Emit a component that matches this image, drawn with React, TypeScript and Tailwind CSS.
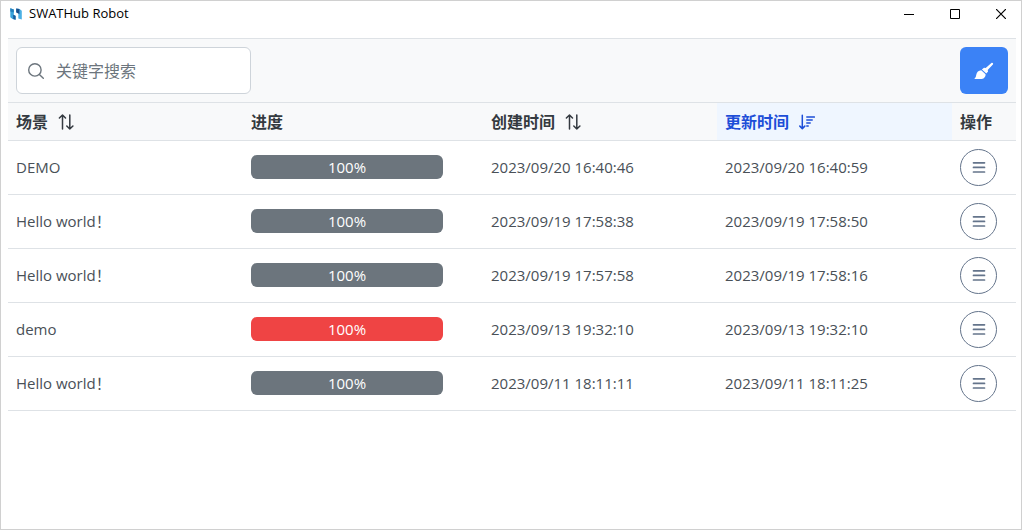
import type { ReactNode } from 'react';

type SortState = 'none' | 'both' | 'desc';
type Column = { title: string; sort: SortState; width: string };
type Row = { id: number; scene: string; progress: number; failed: boolean; created: string; updated: string };

const columns: Column[] = [
  { title: '场景', sort: 'both', width: 'w-[235px]' },
  { title: '进度', sort: 'none', width: 'w-[240px]' },
  { title: '创建时间', sort: 'both', width: 'w-[234px]' },
  { title: '更新时间', sort: 'desc', width: 'w-[235px]' },
  { title: '操作', sort: 'none', width: 'w-16' },
];

const rows: Row[] = [
  { id: 1, scene: 'DEMO', progress: 100, failed: false, created: '2023/09/20 16:40:46', updated: '2023/09/20 16:40:59' },
  { id: 2, scene: 'Hello world！', progress: 100, failed: false, created: '2023/09/19 17:58:38', updated: '2023/09/19 17:58:50' },
  { id: 3, scene: 'Hello world！', progress: 100, failed: false, created: '2023/09/19 17:57:58', updated: '2023/09/19 17:58:16' },
  { id: 4, scene: 'demo', progress: 100, failed: true, created: '2023/09/13 19:32:10', updated: '2023/09/13 19:32:10' },
  { id: 5, scene: 'Hello world！', progress: 100, failed: false, created: '2023/09/11 18:11:11', updated: '2023/09/11 18:11:25' },
];

function Logo() {
  return (
    <svg viewBox="0 0 12 12" className="size-3 shrink-0" aria-hidden="true">
      <path d="M.3.3 3.8 1.5V7L5.6 8V11.7L2.6 11 .3 9.2Z" fill="#38a3dc" />
      <path d="M.3.3 3.8 1.5V4.6L.3 3.4Z" fill="#2480bd" />
      <path d="M3.2 6.8 5.6 7.8V11.7L3.2 11.1Z" fill="#1c5b9a" />
      <path d="M11.8 11.6 8.3 10.5V4.9L6.2 4V.4L9.6 1 11.8 2.8Z" fill="#4bb0e4" />
      <path d="M6.2.4 9.4 1V6L8.3 5.4 6.2 4.4Z" fill="#1a4f8c" />
    </svg>
  );
}

function SearchIcon() {
  return (
    <svg viewBox="0 0 16 16" className="size-4 shrink-0" fill="none" stroke="currentColor" strokeWidth="1.4" strokeLinecap="round" aria-hidden="true">
      <circle cx="6.9" cy="6.9" r="6.2" />
      <path d="m11.4 11.4 3.9 3.9" />
    </svg>
  );
}

function SortIcon() {
  return (
    <svg viewBox="0 0 16 16" className="size-4" fill="none" stroke="currentColor" strokeWidth="1.5" strokeLinecap="round" strokeLinejoin="round" aria-hidden="true">
      <path d="M4.5 15V1M1.4 4 4.5 1l3 3" />
      <path d="M11.8 1v14M8.8 12l3 3 3.1-3" />
    </svg>
  );
}

function SortDescIcon() {
  return (
    <svg viewBox="0 0 16 16" className="size-4" fill="none" stroke="currentColor" strokeWidth="1.5" strokeLinecap="round" strokeLinejoin="round" aria-hidden="true">
      <path d="M3.3 1.2v13.4M.8 12.1l2.5 2.5 2.5-2.5" />
      <path d="M7.8 3h7.6M7.8 6h5.4M7.8 9h3.4M7.8 12h1.4" />
    </svg>
  );
}

function BrushIcon() {
  return (
    <svg viewBox="0 0 20 18" className="h-[18px] w-5" fill="currentColor" aria-hidden="true">
      <path d="M17.4.9c1-.8 2.3.5 1.5 1.5l-5.2 5.5.4 1.6-1.8 2.1-4.4-4 2.1-1.9 1.7.4Z" />
      <path d="M7.2 8.2 11.6 12.2c.2 3-2.1 4.9-5 4.9H1.1c-.6 0-.7-.6-.2-1 1-.7 1-1.8 1.3-3.1.6-2.9 2.3-4.7 5-4.8Z" />
    </svg>
  );
}

function MenuIcon() {
  return (
    <svg viewBox="0 0 14 14" className="size-3.5" fill="none" stroke="currentColor" strokeWidth="1.7" strokeLinecap="round" aria-hidden="true">
      <path d="M1.5 1.8h11M1.5 6.4h11M1.5 11h11" />
    </svg>
  );
}

function WindowButton({ label, children }: { label: string; children: ReactNode }) {
  return (
    <button type="button" aria-label={label} className="flex h-[26px] w-10 items-center justify-center text-black hover:bg-gray-200">
      <svg viewBox="0 0 10 10" className="size-2.5" fill="none" stroke="currentColor" aria-hidden="true">
        {children}
      </svg>
    </button>
  );
}

function TitleBar() {
  return (
    <header className="flex h-[37px] items-start justify-between pl-[9px]">
      <div className="flex h-[26px] items-center gap-[7px] text-[13px] text-black">
        <Logo />
        <span>SWATHub Robot</span>
      </div>
      <div className="flex gap-1.5">
        <WindowButton label="最小化">
          <path d="M0 5.5h10" />
        </WindowButton>
        <WindowButton label="最大化">
          <path d="M.5.5h9v9h-9z" />
        </WindowButton>
        <WindowButton label="关闭">
          <path d="m0 0 10 10M10 0 0 10" strokeWidth="1.2" />
        </WindowButton>
      </div>
    </header>
  );
}

function HeaderCell({ column }: { column: Column }) {
  const sorted = column.sort === 'desc';
  const label = (
    <span className="flex items-center gap-2.5">
      {column.title}
      {column.sort === 'both' && <SortIcon />}
      {sorted && <SortDescIcon />}
    </span>
  );
  return (
    <th
      scope="col"
      aria-sort={sorted ? 'descending' : undefined}
      className={`${column.width} border-b border-[#dee2e6] px-2 text-left font-bold ${sorted ? 'bg-[#eff6ff] text-[#1d4ed8]' : 'bg-[#f8f9fa] text-[#343a40]'}`}
    >
      {column.sort === 'none' ? label : <button type="button">{label}</button>}
    </th>
  );
}

export default function App() {
  return (
    <div className="min-h-screen border border-[#d0d0d0] bg-white font-['Open_Sans','Noto_Sans_CJK_SC',sans-serif]">
      <TitleBar />
      <main className="mr-[5px] ml-[7px]">
        <div className="flex items-center justify-between border-y border-[#dee2e6] bg-[#f8f9fa] p-2">
          <label className="flex h-[47px] w-[235px] items-center gap-3 rounded-md border border-[#ced4da] bg-white pr-3 pl-[11px] text-[#6c757d]">
            <SearchIcon />
            <input
              type="text"
              aria-label="关键字搜索"
              placeholder="关键字搜索"
              className="w-full min-w-0 text-base outline-none placeholder:text-[#6c757d]"
            />
          </label>
          <button type="button" aria-label="清理" className="flex h-[47px] w-12 items-center justify-center rounded-md bg-[#3b82f6] text-white">
            <BrushIcon />
          </button>
        </div>
        <table className="w-full table-fixed border-separate border-spacing-0">
          <thead>
            <tr className="h-[38px] text-base">
              {columns.map((column) => (
                <HeaderCell key={column.title} column={column} />
              ))}
            </tr>
          </thead>
          <tbody className="text-[15px] text-[#495057] [&_td]:border-b [&_td]:border-[#dee2e6] [&_td]:px-2">
            {rows.map((row) => (
              <tr key={row.id} className="h-[54px]">
                <td>{row.scene}</td>
                <td className="pb-0.5">
                  <div
                    role="progressbar"
                    aria-label={row.scene}
                    aria-valuenow={row.progress}
                    className="h-6 w-48 overflow-hidden rounded-md bg-[#dee2e6]"
                  >
                    <div
                      className={`h-full text-center leading-6 text-white ${row.failed ? 'bg-[#ef4444]' : 'bg-[#6c757d]'}`}
                      style={{ width: `${row.progress}%` }}
                    >
                      {row.progress}%
                    </div>
                  </div>
                </td>
                <td>{row.created}</td>
                <td>{row.updated}</td>
                <td>
                  <button
                    type="button"
                    aria-label="操作菜单"
                    className="flex size-[37px] items-center justify-center rounded-full border border-[#64748b] text-[#64748b]"
                  >
                    <MenuIcon />
                  </button>
                </td>
              </tr>
            ))}
          </tbody>
        </table>
      </main>
    </div>
  );
}
